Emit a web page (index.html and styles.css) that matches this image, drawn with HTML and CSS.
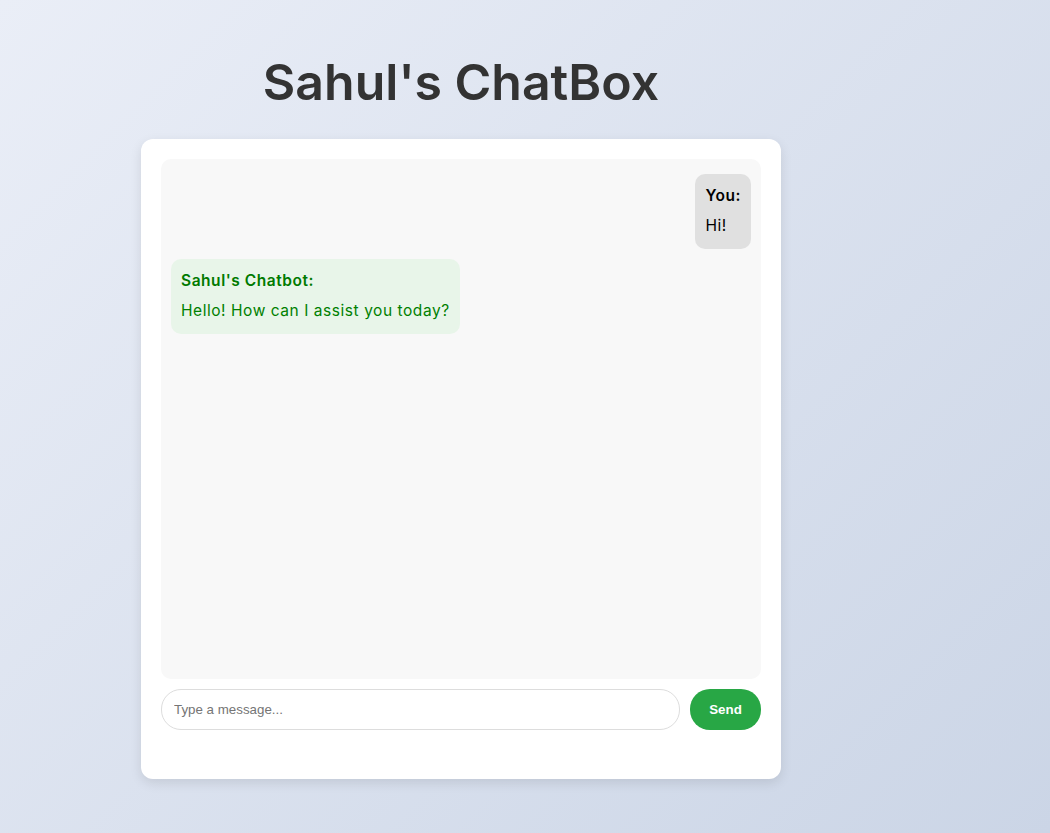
FILE: index.html
```html
<!DOCTYPE html>
<html lang="en">
<head>
<meta charset="UTF-8">
<title>Sahul's ChatBox</title>
<link rel="stylesheet" href="styles.css">
</head>
<body>
<main class="page">
  <h1 class="title">Sahul's ChatBox</h1>
  <section class="card">
    <div class="chat">
      <div class="msg msg-user">
        <strong class="msg-label">You:</strong>
        <p class="msg-text">Hi!</p>
      </div>
      <div class="msg msg-bot">
        <strong class="msg-label">Sahul's Chatbot:</strong>
        <p class="msg-text">Hello! How can I assist you today?</p>
      </div>
    </div>
    <form class="composer" onsubmit="return false;">
      <input class="composer-input" type="text" placeholder="Type a message...">
      <button class="composer-send" type="submit">Send</button>
    </form>
  </section>
</main>
</body>
</html>
```

FILE: styles.css
```css
* { box-sizing: border-box; }

html, body { margin: 0; padding: 0; }

body {
  min-height: 100vh;
  background: linear-gradient(135deg, #eaeef7 0%, #cbd5e6 100%);
  font-family: "Inter", "Open Sans", sans-serif;
  color: #333;
}

.page {
  width: 922px;
  display: flex;
  flex-direction: column;
  align-items: center;
  padding-top: 53px;
}

.title {
  margin: 0 0 28px;
  font-size: 50px;
  line-height: 58px;
  font-weight: 600;
  color: #333;
  letter-spacing: 0;
}

.card {
  width: 640px;
  height: 640px;
  padding: 20px;
  background: #fff;
  border-radius: 12px;
  box-shadow: 0 4px 12px rgba(0, 0, 0, 0.1);
}

.chat {
  height: 520px;
  background: #f8f8f8;
  border-radius: 10px;
  padding: 10px;
  display: flex;
  flex-direction: column;
  align-items: flex-start;
}

.msg {
  margin: 5px 0;
  padding: 11px 10px 11.5px;
  border-radius: 10px;
  font-size: 15.5px;
  line-height: 22.5px;
  letter-spacing: 0.55px;
}

.msg-user {
  align-self: flex-end;
  background: #e0e0e0;
  color: #000;
}

.msg-bot {
  background: #e8f5e9;
  color: #008000;
}

.msg-bot .msg-label { color: #007a00; }

.msg-label {
  display: block;
  font-weight: 600;
  margin-bottom: 7.5px;
}

.msg-text { margin: 0; }

.composer {
  display: flex;
  gap: 10px;
  margin: 10px 0 0;
}

.composer-input {
  flex: 1;
  height: 41px;
  padding: 0 12px;
  border: 1px solid #ddd;
  border-radius: 20px;
  font-family: "Liberation Sans", Arial, sans-serif;
  font-size: 13.33px;
  color: #333;
  background: #fff;
  outline: none;
}

.composer-input::placeholder { color: #757575; }

.composer-send {
  width: 71px;
  height: 41px;
  border: none;
  border-radius: 20px;
  background: #28a745;
  color: #fff;
  font-family: "Liberation Sans", Arial, sans-serif;
  font-size: 13.33px;
  font-weight: 700;
  cursor: pointer;
}
```
